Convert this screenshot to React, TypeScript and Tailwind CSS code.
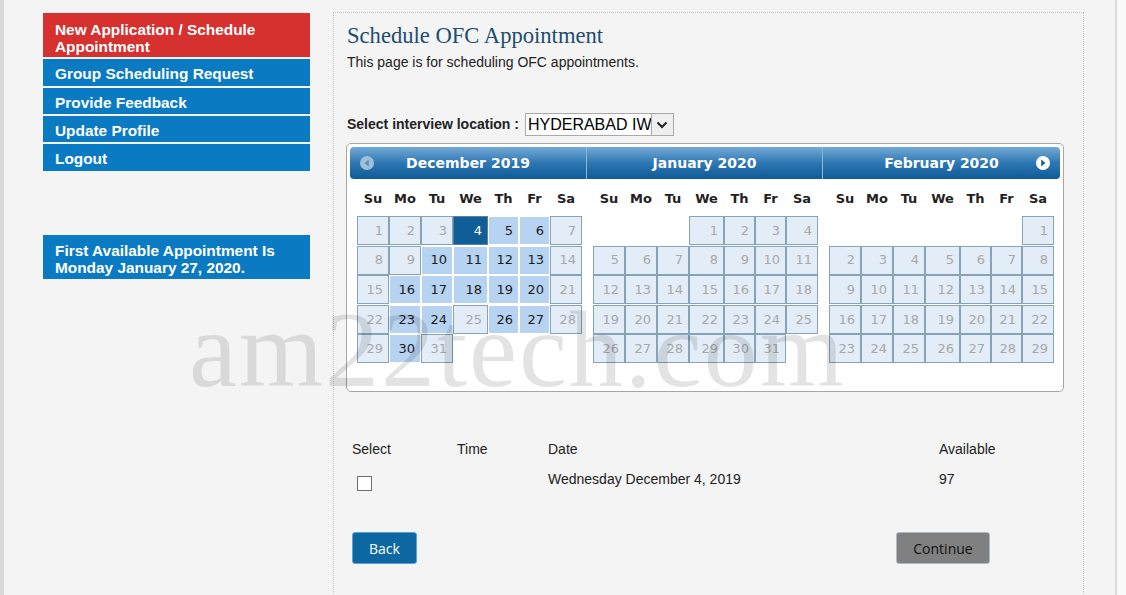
import React from 'react'

type Month = { name: string; start: number; days: number; open: number[]; picked?: number }

const months: Month[] = [
  { name: 'December 2019', start: 0, days: 31, open: [5, 6, 10, 11, 12, 13, 16, 17, 18, 19, 20, 23, 24, 26, 27, 30], picked: 4 },
  { name: 'January 2020', start: 3, days: 31, open: [] },
  { name: 'February 2020', start: 6, days: 29, open: [] },
]

const dayNames = ['Su', 'Mo', 'Tu', 'We', 'Th', 'Fr', 'Sa']
const cols = 'grid grid-cols-[32px_32px_32px_35px_31px_31px_32px]'

const navItems = ['Group Scheduling Request', 'Provide Feedback', 'Update Profile', 'Logout']

function MonthGrid({ m }: { m: Month }) {
  const cells: React.ReactNode[] = []
  for (let i = 0; i < m.start; i++) cells.push(<div key={'b' + i} />)
  for (let d = 1; d <= m.days; d++) {
    let cls = 'border-[#86a3b9] bg-[#e2edf8] text-[#a8a8a8]'
    if (m.picked === d) cls = 'border-[#5d7f99] bg-[#0f5e98] text-white'
    else if (m.open.includes(d)) cls = 'border-white bg-[#b6d3f2] text-[#1c1c1c]'
    cells.push(
      <div key={d} className={`h-[29px] border flex items-center justify-end pr-[5px] text-[13px] ${cls}`}>
        {d}
      </div>
    )
  }
  return (
    <div className="pl-[7px] pt-[8px]">
      <div className={`${cols} h-[24px] items-center`}>
        {dayNames.map((n) => (
          <div key={n} className="text-center text-[13px] font-bold text-[#222]">{n}</div>
        ))}
      </div>
      <div className={`${cols} mt-[5px] gap-y-[0.6px]`}>{cells}</div>
    </div>
  )
}

export default function App() {
  return (
    <div className="relative w-[1126px] h-[595px] overflow-hidden flex bg-[#f4f4f4] font-['Liberation_Sans',Arial,sans-serif]">
      <div className="w-[4px] shrink-0 bg-[#d9d9d9]" />

      {/* left menu */}
      <div className="ml-[39px] mt-[13px] w-[267px] shrink-0">
        <div className="flex flex-col gap-[2px] text-white font-bold text-[15.4px] leading-[17px]">
          <div className="h-[44px] bg-[#d6302f] pl-[12px] pt-[8px]">New Application / Schedule<br />Appointment</div>
          {navItems.map((t, i) => (
            <div key={t} className={`${i === 0 || i === 3 ? 'h-[27px]' : 'h-[26px]'} bg-[#0a7bc2] pl-[12px] pt-[6px]`}>{t}</div>
          ))}
        </div>
        <div className="mt-[64px] h-[44px] bg-[#0a7bc2] pl-[12px] pt-[7px] text-white font-bold text-[15.4px] leading-[17px]">
          First Available Appointment Is<br />Monday January 27, 2020.
        </div>
      </div>

      {/* main content */}
      <div className="ml-[23px] mt-[12px] w-[751px] h-[600px] shrink-0 border border-dotted border-[#c4c4c4] pl-[12px]">
        <h1 className="ml-[1px] mt-[10px] text-[22.6px] leading-[26px] text-[#1d4d6f] font-['Liberation_Serif',Georgia,serif]">Schedule OFC Appointment</h1>
        <p className="ml-[1px] mt-[5px] text-[14px] leading-[16px] text-[#222]">This page is for scheduling OFC appointments.</p>

        <div className="ml-[1px] mt-[43px] flex items-center h-[23px]">
          <span className="text-[14px] font-bold text-[#222]">Select interview location :</span>
          <div className="ml-[6px] w-[149px] h-[23px] bg-white border border-[#a9a9a9] flex items-center">
            <span className="flex-1 overflow-hidden whitespace-nowrap pl-[2px] text-[16px] text-black">HYDERABAD IW</span>
            <div className="w-[22px] h-[21px] border-l border-[#a9a9a9] bg-[#efefef] flex items-center justify-center">
              <svg width="12" height="8" viewBox="0 0 12 8"><path d="M1.5 1.5 L6 6 L10.5 1.5" fill="none" stroke="#222" strokeWidth="2" /></svg>
            </div>
          </div>
        </div>

        {/* calendar */}
        <div className="mt-[7px] w-[718px] h-[249px] bg-white border border-[#a6a6a6] rounded-[5px] p-[3px] font-['DejaVu_Sans',Verdana,sans-serif]">
          <div className="relative h-[32px] flex rounded-[4px] bg-gradient-to-b from-[#73aad7] via-[#2d77b2] to-[#0c5b96] text-white text-[14px] font-bold">
            {months.map((m, i) => (
              <div key={m.name} className={`${i < 2 ? 'w-[236px]' : 'flex-1'} ${i > 0 ? 'border-l border-[#8db6d8]' : ''} flex items-center justify-center`}>
                {m.name}
              </div>
            ))}
            <svg className="absolute left-[9px] top-[8px]" width="16" height="16" viewBox="0 0 16 16">
              <circle cx="8" cy="8" r="7" fill="#9fc0dc" />
              <path d="M9.8 4.6 L5.6 8 L9.8 11.4 Z" fill="#5f8db5" />
            </svg>
            <svg className="absolute right-[9px] top-[8px]" width="16" height="16" viewBox="0 0 16 16">
              <circle cx="8" cy="8" r="7" fill="#ffffff" />
              <path d="M6.2 4.6 L10.4 8 L6.2 11.4 Z" fill="#135f9b" />
            </svg>
          </div>
          <div className="flex">
            {months.map((m, i) => (
              <div key={m.name} className={i < 2 ? 'w-[236px]' : 'flex-1'}>
                <MonthGrid m={m} />
              </div>
            ))}
          </div>
        </div>

        {/* slot table */}
        <div className="ml-[6px] mt-[49px] grid grid-cols-[105px_91px_391px_1fr] text-[14px] leading-[16px] text-[#222]">
          <div>Select</div>
          <div>Time</div>
          <div>Date</div>
          <div>Available</div>
        </div>
        <div className="ml-[6px] mt-[14px] grid grid-cols-[105px_91px_391px_1fr] text-[14px] leading-[16px] text-[#222]">
          <div>
            <div className="ml-[5px] mt-[5px] w-[15px] h-[15px] bg-white border border-[#707070]" />
          </div>
          <div />
          <div>Wednesday December 4, 2019</div>
          <div>97</div>
        </div>

        <div className="ml-[6px] mt-[41px] flex font-['Open_Sans',sans-serif] text-[14px]">
          <button className="w-[65px] h-[32px] rounded-[3px] bg-[#0d67a1] border border-[#5d9fd0] text-white">Back</button>
          <button className="ml-[479px] w-[94px] h-[32px] rounded-[3px] bg-[#808080] border border-[#a9bacb] text-[#111]">Continue</button>
        </div>
      </div>

      <div className="w-[31px] shrink-0" />
      <div className="w-[2px] shrink-0 bg-[#dadada]" />
      <div className="flex-1 bg-[#f9f9f9]" />

      {/* watermark */}
      <div className="pointer-events-none absolute left-[189px] top-[290px] text-[108px] leading-[120px] tracking-[2px] text-black/[0.11] font-['Liberation_Serif',serif] whitespace-nowrap">
        am22tech.com
      </div>
    </div>
  )
}
